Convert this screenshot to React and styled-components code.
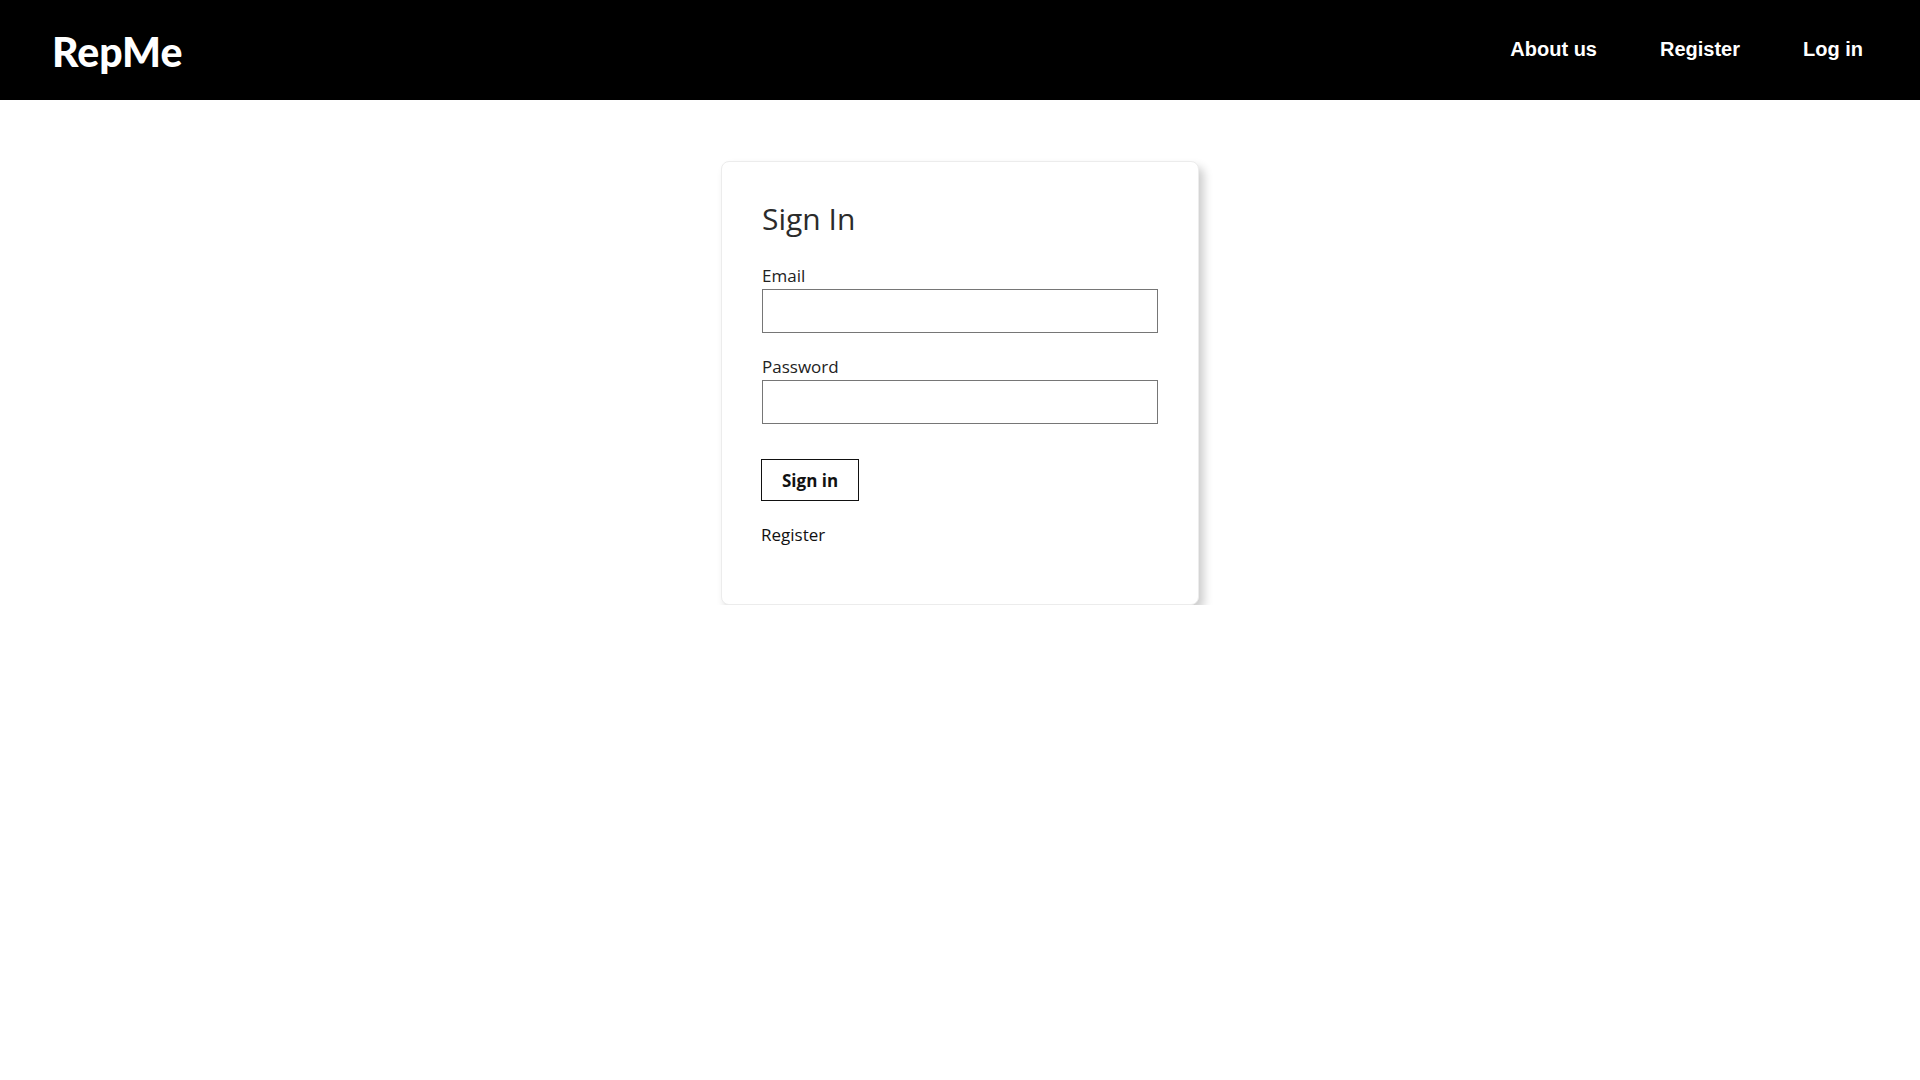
import React from 'react'
import styled, { createGlobalStyle } from 'styled-components'

const GlobalStyle = createGlobalStyle`
    html, body {
        margin: 0;
        padding: 0;
        background-color: #ffffff;
        font-family: "Open Sans", "Noto Sans", sans-serif;
    }
    * {
        box-sizing: border-box;
    }
`

const Navbar = styled.header`
    height: 100px;
    background-color: #000000;
    display: flex;
    align-items: center;
    justify-content: space-between;
    padding: 0 57px 0 52px;
`
const Logo = styled.a`
    font-family: Lato, "Open Sans", sans-serif;
    font-size: 41px;
    font-weight: 900;
    color: #ffffff;
    text-decoration: none;
    margin-top: 2px;
`
const NavLinks = styled.nav`
    display: flex;
    align-items: center;
    gap: 63px;
    margin-top: -1px;
`
const NavLink = styled.a`
    font-family: "Liberation Sans", Arial, sans-serif;
    font-size: 20px;
    font-weight: 700;
    color: #ffffff;
    text-decoration: none;
    cursor: pointer;
`

const Main = styled.main`
    display: flex;
    justify-content: center;
    padding-top: 61px;
`
const Card = styled.div`
    width: 478px;
    padding: 39px 40px 57px;
    background-color: #ffffff;
    border: 1px solid #ececec;
    border-radius: 8px;
    box-shadow: 5px 6px 10px rgba(0, 0, 0, 0.2);
`
const Title = styled.h1`
    margin: 0 0 27px;
    font-size: 30px;
    font-weight: 400;
    line-height: 36px;
    color: #2b2b2b;
`
const Form = styled.form`
    display: flex;
    flex-direction: column;
`
const Label = styled.label`
    font-size: 17px;
    line-height: 24px;
    color: #222222;
`
const Input = styled.input`
    width: 100%;
    height: 44px;
    margin: 1px 0 ${(p) => p.$gap || 0}px;
    padding: 0 10px;
    border: 1px solid #767676;
    border-radius: 0;
    font-size: 16px;
    outline: none;
`
const Button = styled.button`
    align-self: flex-start;
    height: 42px;
    margin: 35px 0 0 -1px;
    padding: 0 20px;
    background-color: #ffffff;
    border: 1px solid #111111;
    font-family: "Open Sans", sans-serif;
    font-size: 17px;
    font-weight: 700;
    color: #111111;
    cursor: pointer;
`
const Link = styled.a`
    margin: 22px 0 0 -1px;
    font-size: 17px;
    line-height: 24px;
    color: #111111;
    text-decoration: none;
    cursor: pointer;
`

const App = () => {
    return (
        <>
            <GlobalStyle />
            <Navbar>
                <Logo>RepMe</Logo>
                <NavLinks>
                    <NavLink>About us</NavLink>
                    <NavLink>Register</NavLink>
                    <NavLink>Log in</NavLink>
                </NavLinks>
            </Navbar>
            <Main>
                <Card>
                    <Title>Sign In</Title>
                    <Form onSubmit={(e) => e.preventDefault()}>
                        <Label htmlFor="email">Email</Label>
                        <Input id="email" type="email" $gap={22} />
                        <Label htmlFor="password">Password</Label>
                        <Input id="password" type="password" />
                        <Button type="submit">Sign in</Button>
                        <Link>Register</Link>
                    </Form>
                </Card>
            </Main>
        </>
    )
}

export default App
